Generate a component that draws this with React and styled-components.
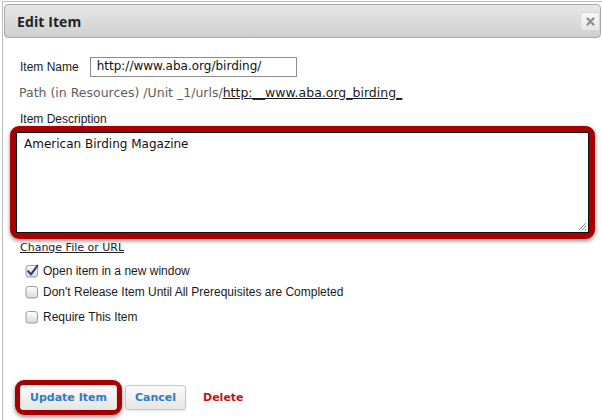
import React from 'react';
import styled, { createGlobalStyle } from 'styled-components';

const GlobalStyle = createGlobalStyle`
  html, body {
    margin: 0;
    padding: 0;
    background: #ffffff;
    overflow: hidden;
  }
  body {
    font-family: "Liberation Sans", Arial, sans-serif;
  }
`;

const Dialog = styled.div`
  margin: 1px 0 0 2px;
  width: 620px;
  height: 440px;
  border: 1px solid #bdbdbd;
  background: #ffffff;
  box-sizing: border-box;
`;

const Header = styled.div`
  margin: 2px 0 0 1px;
  width: 597px;
  height: 34px;
  box-sizing: border-box;
  border: 1px solid #a8a8a8;
  border-radius: 4px;
  background: linear-gradient(#e8e8e8, #cfcfcf);
  display: flex;
  align-items: center;
  justify-content: space-between;
  padding: 0 0 0 12px;
`;

const Title = styled.h2`
  margin: 0;
  font-family: "Open Sans", "DejaVu Sans", sans-serif;
  font-weight: 700;
  font-size: 14px;
  color: #222222;
  letter-spacing: 0.1px;
`;

const CloseButton = styled.button`
  width: 20px;
  height: 19px;
  margin-right: 0;
  padding: 0;
  border: 1px solid #d6d6d6;
  border-radius: 3px;
  background: linear-gradient(#f7f7f7, #e6e6e6);
  display: flex;
  align-items: center;
  justify-content: center;
`;

const Body = styled.div`
  padding: 19px 0 0 17px;
`;

const NameRow = styled.div`
  display: flex;
  align-items: center;
  gap: 11px;
`;

const Label = styled.label`
  font-size: 12px;
  color: #1a1a1a;
`;

const TextInput = styled.div`
  width: 207px;
  height: 20px;
  box-sizing: border-box;
  border: 1px solid #8c8c8c;
  padding: 0 0 0 6px;
  font-family: "DejaVu Sans", Verdana, sans-serif;
  font-size: 12px;
  line-height: 16px;
  color: #111111;
`;

const PathLine = styled.div`
  margin-top: 7px;
  margin-left: -1px;
  font-family: "DejaVu Sans", Verdana, sans-serif;
  font-size: 12.5px;
  line-height: 18px;
  color: #5e5e5e;
  white-space: nowrap;
`;

const PathLink = styled.span`
  color: #1a1a1a;
  text-decoration: underline;
`;

const DescLabel = styled(Label)`
  display: block;
  margin-top: 10px;
  line-height: 14px;
`;

const Highlight = styled.div`
  display: ${(p) => (p.$inline ? 'inline-flex' : 'flex')};
  border: ${(p) => (p.$thin ? 5 : 6)}px solid #a60000;
  border-radius: 9px;
  box-shadow: 0 2px 4px rgba(0, 0, 0, 0.45);
`;

const DescBox = styled(Highlight)`
  margin: 0 0 0 -10px;
  width: 585px;
  box-sizing: border-box;
`;

const TextArea = styled.div`
  position: relative;
  flex: 1;
  height: 101px;
  box-sizing: border-box;
  border: 1px solid #111111;
  padding: 3px 7px;
  font-family: "DejaVu Sans", Verdana, sans-serif;
  font-size: 12px;
  line-height: 16px;
  color: #111111;
`;

const Grip = styled.svg`
  position: absolute;
  right: 1px;
  bottom: 1px;
`;

const ChangeLink = styled.a`
  display: block;
  margin-top: 0;
  font-family: "DejaVu Sans", Verdana, sans-serif;
  font-size: 11px;
  line-height: 18px;
  color: #222222;
  text-decoration: underline;
`;

const Options = styled.div`
  margin-top: 6px;
  display: flex;
  flex-direction: column;
  gap: 5px;
`;

const Option = styled.div`
  display: flex;
  align-items: center;
  gap: 4px;
  padding-left: 5px;
  height: 16px;
  font-size: 12px;
  color: #1a1a1a;

  &:last-child {
    margin-top: 4px;
  }
`;

const ButtonBar = styled.div`
  margin: 55px 0 0 -5px;
  display: flex;
  align-items: center;
`;

const Button = styled.button`
  height: 25px;
  padding: 0 ${(p) => p.$pad}px;
  border: 1px solid ${(p) => (p.$bare ? '#e0e0e0' : '#c9c9c9')};
  border-radius: 3px;
  background: linear-gradient(#fbfbfb, #e6e6e6);
  box-shadow: 0 1px 2px rgba(0, 0, 0, 0.12);
  font-family: "DejaVu Sans", Verdana, sans-serif;
  font-weight: 700;
  font-size: 11px;
  color: #2e7cc6;
`;

const CancelButton = styled(Button)`
  margin-left: 3px;
`;

const DeleteLink = styled.a`
  margin-left: 17px;
  font-family: "DejaVu Sans", Verdana, sans-serif;
  font-weight: 700;
  font-size: 11px;
  color: #cc1010;
`;

const CheckBox = ({ checked }) => (
  <svg width="14" height="14" viewBox="0 0 14 14">
    <defs>
      <linearGradient id="cbg" x1="0" y1="0" x2="0" y2="1">
        <stop offset="0" stopColor="#ffffff" />
        <stop offset="1" stopColor="#d9d9d9" />
      </linearGradient>
    </defs>
    <rect x="1" y="1.5" width="11.5" height="11.5" rx="2.5" fill="url(#cbg)" stroke="#9a9a9a" />
    {checked && (
      <path d="M3.2 7.2 L6 10.4 L12.4 1.6" fill="none" stroke="#24417e" strokeWidth="2.1" strokeLinecap="round" strokeLinejoin="round" />
    )}
  </svg>
);

const App = () => (
  <>
    <GlobalStyle />
    <Dialog>
      <Header>
        <Title>Edit Item</Title>
        <CloseButton aria-label="close">
          <svg width="9" height="9" viewBox="0 0 9 9">
            <path d="M1.5 1.5 L7.5 7.5 M7.5 1.5 L1.5 7.5" stroke="#8a8a8a" strokeWidth="2.2" strokeLinecap="round" />
          </svg>
        </CloseButton>
      </Header>
      <Body>
        <NameRow>
          <Label>Item Name</Label>
          <TextInput>http://www.aba.org/birding/</TextInput>
        </NameRow>
        <PathLine>
          Path (in Resources) /Unit _1/urls/<PathLink>http:__www.aba.org_birding_</PathLink>
        </PathLine>
        <DescLabel>Item Description</DescLabel>
        <DescBox>
          <TextArea>
            American Birding Magazine
            <Grip width="10" height="10" viewBox="0 0 10 10">
              <path d="M9 2 L2 9 M9 5 L5 9 M9 8 L8 9" stroke="#8a8a8a" strokeWidth="1" />
            </Grip>
          </TextArea>
        </DescBox>
        <ChangeLink>Change File or URL</ChangeLink>
        <Options>
          <Option>
            <CheckBox checked />
            Open item in a new window
          </Option>
          <Option>
            <CheckBox />
            Don't Release Item Until All Prerequisites are Completed
          </Option>
          <Option>
            <CheckBox />
            Require This Item
          </Option>
        </Options>
        <ButtonBar>
          <Highlight $inline $thin>
            <Button $pad={9} $bare>Update Item</Button>
          </Highlight>
          <CancelButton $pad={9}>Cancel</CancelButton>
          <DeleteLink>Delete</DeleteLink>
        </ButtonBar>
      </Body>
    </Dialog>
  </>
);

export default App;
